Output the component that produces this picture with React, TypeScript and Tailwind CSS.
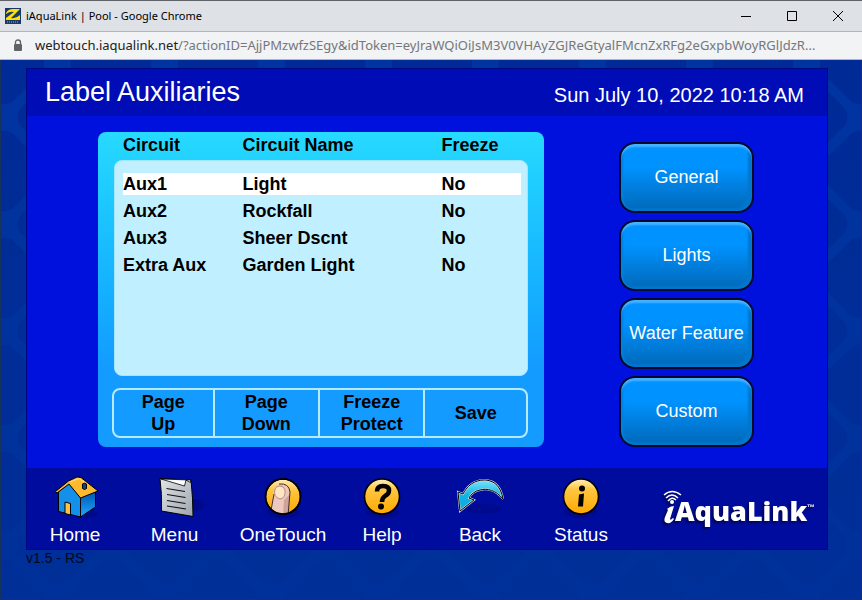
import type { ReactNode } from "react";
import { clsx } from "clsx";

const circuits = [
  { circuit: "Aux1", name: "Light", freeze: "No" },
  { circuit: "Aux2", name: "Rockfall", freeze: "No" },
  { circuit: "Aux3", name: "Sheer Dscnt", freeze: "No" },
  { circuit: "Extra Aux", name: "Garden Light", freeze: "No" },
];

const actions = [["Page", "Up"], ["Page", "Down"], ["Freeze", "Protect"], ["Save"]];

const categories = ["General", "Lights", "Water Feature", "Custom"];

function HomeIcon() {
  return (
    <svg width="48" height="44" viewBox="0 0 48 44">
      <defs>
        <linearGradient id="wall" x1="0" y1="0" x2="0" y2="1">
          <stop offset="0" stopColor="#0058b4" />
          <stop offset="1" stopColor="#1fa8ff" />
        </linearGradient>
      </defs>
      <ellipse cx="34" cy="37" rx="13" ry="5" fill="#000880" opacity=".7" />
      <path d="M7.5 16 L18 7 L29.5 21 V41 L7.5 35.5 Z" fill="#1590ea" stroke="#000" />
      <path d="M29.5 21 L44.5 16 V31 L29.5 41 Z" fill="url(#wall)" stroke="#000" />
      <path
        d="M4.5 15.5 L17.5 5 L26 1 L30 1.5 L47 15 L29.5 22 L18 8 L6 17 Z"
        fill="#ffb92c"
        stroke="#000"
        strokeLinejoin="round"
      />
      <path d="M19 6 L28 2.5 L36 8" fill="none" stroke="#ffe08a" />
      <path d="M31.5 8 L33.5 7 L35.5 8 V12.5 L33.5 13.5 L31.5 12.5 Z" fill="#1c3f7c" stroke="#000" />
      <path d="M14 26 L19.5 27.5 V39 L14 37.5 Z" fill="#ffc044" stroke="#000" />
    </svg>
  );
}

function MenuIcon() {
  return (
    <svg width="48" height="44" viewBox="0 0 48 44" className="overflow-visible">
      <defs>
        <linearGradient id="sheet" x1="0" y1="0" x2="1" y2="1">
          <stop offset="0" stopColor="#e2e5e9" />
          <stop offset="1" stopColor="#9da4ac" />
        </linearGradient>
      </defs>
      <ellipse cx="44" cy="29" rx="9" ry="6" fill="#000880" opacity=".7" />
      <path d="M9 2.5 L40 4 Q42 22 42 40.5 L10.5 35 Q11 18 9 2.5 Z" fill="url(#sheet)" stroke="#000" />
      <path d="M10 3 L33.5 10 L35 4 L39.5 6.5 V4 Z" fill="#fff" stroke="#000" strokeWidth=".8" />
      <path
        d="M15.5 12.5 L34 15.5 M16 18.5 L34.5 21.5 M16 24.5 L34.5 27.5 M16 30 L35 33"
        stroke="#111"
        strokeWidth="1.2"
      />
    </svg>
  );
}

function GoldDisc({ children }: { children: ReactNode }) {
  return (
    <svg width="48" height="44" viewBox="0 0 48 44">
      <defs>
        <linearGradient id="gold" x1="0" y1="0" x2="0" y2="1">
          <stop offset="0" stopColor="#fff0bd" />
          <stop offset=".3" stopColor="#ffc640" />
          <stop offset="1" stopColor="#ffa800" />
        </linearGradient>
        <clipPath id="disc">
          <circle cx="24" cy="20.5" r="17" />
        </clipPath>
      </defs>
      <ellipse cx="24" cy="36" rx="17" ry="6" fill="#000880" opacity=".7" />
      <circle cx="24" cy="20.5" r="17.5" fill="url(#gold)" stroke="#000" strokeWidth="1.6" />
      {children}
    </svg>
  );
}

function TouchIcon() {
  return (
    <GoldDisc>
      <g clipPath="url(#disc)">
        <path d="M11 40 L14.5 16 Q15 8 22.5 8 Q30 8 31 16 L29 40 Z" fill="#edc8bd" />
        <path d="M25 24 L24 40 H29 L31 18 Z" fill="#b68c86" opacity=".6" />
        <path d="M11 40 L15 18 M20 8 Q30 7 31 16 L29 40" fill="none" stroke="#402a26" />
        <path d="M16 13 Q17 10 21 10 Q25 10 26 14 Q27 22 21 23 Q14 21 16 13 Z" fill="#ffe7c6" stroke="#b38b7c" />
      </g>
      <circle cx="24" cy="20.5" r="17.5" fill="none" stroke="#000" strokeWidth="1.6" />
    </GoldDisc>
  );
}

function HelpIcon() {
  return (
    <GoldDisc>
      <path d="M19 15.5 Q19 10 25 10 Q31 10 31 14.5 Q31 18 27 20 Q24 22 24 26" fill="none" stroke="#000" strokeWidth="4.5" />
      <circle cx="23" cy="30.5" r="3" fill="#000" />
    </GoldDisc>
  );
}

function BackIcon() {
  return (
    <svg width="48" height="44" viewBox="-1 0 48 44" className="overflow-visible">
      <defs>
        <linearGradient id="arrow" x1="0" y1="0" x2="0" y2="1">
          <stop offset="0" stopColor="#7ce4fa" />
          <stop offset=".5" stopColor="#0cb4e6" />
          <stop offset="1" stopColor="#12a6dd" />
        </linearGradient>
      </defs>
      <ellipse cx="27" cy="33" rx="17" ry="5" fill="#000880" opacity=".5" />
      <path
        d="M3 35 L1 16 L6 18 C13 5 22 4 29 4 C38 5 44 11 46 23 C39 14 30 12 23 14 C18 15 14 18 12 22 L17 24 Z"
        fill="url(#arrow)"
        stroke="#d9e0e8"
        strokeWidth="2"
      />
      <path
        d="M3 35 L1 16 L6 18 C13 5 22 4 29 4 C38 5 44 11 46 23 C39 14 30 12 23 14 C18 15 14 18 12 22 L17 24 Z"
        fill="none"
        stroke="#000"
      />
    </svg>
  );
}

function StatusIcon() {
  return (
    <GoldDisc>
      <circle cx="25" cy="12.5" r="3" fill="#000" />
      <path d="M22 18.5 L27 17.5 L26 30.5 H21 Z" fill="#000" />
    </GoldDisc>
  );
}

const navItems = [
  { label: "Home", icon: <HomeIcon /> },
  { label: "Menu", icon: <MenuIcon /> },
  { label: "OneTouch", icon: <TouchIcon /> },
  { label: "Help", icon: <HelpIcon /> },
  { label: "Back", icon: <BackIcon /> },
  { label: "Status", icon: <StatusIcon /> },
];

function Logo() {
  return (
    <svg
      width="156"
      height="46"
      viewBox="0 0 156 46"
      role="img"
      aria-label="iAquaLink"
      className="drop-shadow-[-2px_2px_1px_#000550]"
    >
      <g fill="#fff">
        <path d="M4 19 Q7 16 11 16 L7 29 Q7 31 10 28 L11 29 Q8 34 4 33 Q0 32 2 27 L5 20 Z" />
        <circle cx="9" cy="12" r="2" />
        <text x="12" y="31" fontFamily="Open Sans, sans-serif" fontSize="27" fontWeight="800">
          AquaLink
        </text>
        <text x="144" y="20" fontFamily="Liberation Sans, sans-serif" fontSize="8" fontWeight="700">
          ™
        </text>
      </g>
      <path d="M1 5 Q9 -2 18 5 M3 8 Q9 2 15 8 M5 11 Q9 6 13 10" fill="none" stroke="#fff" strokeWidth="1.5" />
    </svg>
  );
}

function Favicon() {
  return (
    <svg width="16" height="16" viewBox="0 0 16 16">
      <path d="M0 0 H16 V16 H0 Z" fill="#183a6b" />
      <path d="M1 5 Q3 1 8 1 H15 L6 10 Q11 11 15 7 V12 H1 V10 L9 4 Q5 3 1 6 Z" fill="#ffe000" />
      <path d="M2 14 H14" stroke="#c8b428" strokeDasharray="1 1" />
    </svg>
  );
}

function TitleBar() {
  return (
    <header className="flex h-8 items-center border-t border-b border-t-[#606367] border-b-[#b3b5b8] bg-[#dee1e6] pl-[5px]">
      <Favicon />
      <h1 className="ml-[5px] flex-1 font-['Noto_Sans',sans-serif] text-[11px] text-black">
        iAquaLink | Pool - Google Chrome
      </h1>
      <div className="flex pr-px">
        <button type="button" aria-label="Minimize" className="flex w-[46px] justify-center">
          <svg width="12" height="12" viewBox="0 0 12 12" stroke="#000">
            <path d="M1 6.5 H11" />
          </svg>
        </button>
        <button type="button" aria-label="Maximize" className="flex w-[46px] justify-center">
          <svg width="12" height="12" viewBox="0 0 12 12" stroke="#000" fill="none">
            <path d="M1.5 1.5 H10.5 V10.5 H1.5 Z" />
          </svg>
        </button>
        <button type="button" aria-label="Close" className="flex w-[46px] justify-center">
          <svg width="12" height="12" viewBox="0 0 12 12" stroke="#000">
            <path d="M1 1 L11 11 M11 1 L1 11" />
          </svg>
        </button>
      </div>
    </header>
  );
}

function AddressBar() {
  return (
    <div className="flex h-7 items-center gap-3 border-b border-[#b3b5b8] bg-[#f1f3f4] pl-[13px]">
      <svg width="10" height="13" viewBox="0 0 10 13" className="shrink-0">
        <path d="M2.5 5 V3.5 Q2.5 1 5 1 Q7.5 1 7.5 3.5 V5" fill="none" stroke="#5f6368" strokeWidth="1.4" />
        <rect x="1" y="5" width="8" height="7" rx="1" fill="#5f6368" />
      </svg>
      <p className="min-w-0 truncate font-['Noto_Sans',sans-serif] text-[13px] text-[#74777b]">
        <span className="text-[#202124]">webtouch.iaqualink.net</span>
        /?actionID=AjjPMzwfzSEgy&idToken=eyJraWQiOiJsM3V0VHAyZGJReGtyalFMcnZxRFg2eGxpbWoyRGlJdzR...
      </p>
    </div>
  );
}

// Rounded diamond tiles behind the console
function Backdrop() {
  return (
    <svg className="absolute inset-0 h-full w-full" aria-hidden="true">
      <defs>
        <pattern id="tiles" x="57" y="4" width="107" height="107" patternUnits="userSpaceOnUse">
          <g fill="#002b96">
            <rect x="20" y="-33" width="66" height="66" rx="15" transform="rotate(45 53 0)" />
            <rect x="20" y="74" width="66" height="66" rx="15" transform="rotate(45 53 107)" />
            <rect x="-33" y="20" width="66" height="66" rx="15" transform="rotate(45 0 53)" />
            <rect x="74" y="20" width="66" height="66" rx="15" transform="rotate(45 107 53)" />
          </g>
        </pattern>
        <linearGradient id="fade" x1="0" y1="0" x2="0" y2="1">
          <stop offset="0" stopColor="#003099" stopOpacity="0" />
          <stop offset=".7" stopColor="#003099" stopOpacity=".5" />
          <stop offset="1" stopColor="#003099" stopOpacity=".85" />
        </linearGradient>
      </defs>
      <rect width="100%" height="100%" fill="url(#tiles)" />
      <rect width="100%" height="100%" fill="url(#fade)" />
    </svg>
  );
}

function CircuitCard() {
  return (
    <section className="rounded-lg bg-linear-to-b from-[#27daff] to-[#149bff] to-75% pb-[9px]">
      <div className="grid">
        <div className="mx-4 mt-7 h-[216px] rounded-lg border border-[#a5e6ff] bg-[#c0f0ff] [grid-area:1/1]" />
        <div className="relative mr-[23px] ml-[25px] [grid-area:1/1]">
          <table className="w-full table-fixed border-separate border-spacing-x-0 border-spacing-y-[5px] text-left text-[18px] leading-[22px] font-bold text-black">
            <thead>
              <tr className="leading-[17px]">
                <th scope="col" className="w-[30%] p-0 pb-[14px]">Circuit</th>
                <th scope="col" className="w-[50%] p-0 pb-[14px]">Circuit Name</th>
                <th scope="col" className="w-[20%] p-0 pb-[14px]">Freeze</th>
              </tr>
            </thead>
            <tbody>
              {circuits.map((row, index) => (
                <tr key={row.circuit} className={clsx(index === 0 && "bg-white")}>
                  <td className="p-0">{row.circuit}</td>
                  <td className="p-0">{row.name}</td>
                  <td className="p-0">{row.freeze}</td>
                </tr>
              ))}
            </tbody>
          </table>
        </div>
      </div>
      <div className="mt-3 mr-4 ml-[14px] grid h-[50px] grid-cols-[101fr_106fr_106fr_101fr] divide-x-2 divide-[#b5eaff] rounded-lg border-2 border-[#b5eaff]">
        {actions.map((words) => (
          <button key={words.join(" ")} type="button" className="text-[18px] leading-[22px] font-bold text-black">
            {words.map((word) => (
              <span key={word} className="block">{word}</span>
            ))}
          </button>
        ))}
      </div>
    </section>
  );
}

export default function App() {
  return (
    <div className="flex min-h-screen flex-col font-['Liberation_Sans',Arial,sans-serif]">
      <TitleBar />
      <AddressBar />
      <main className="relative flex-1 border-x border-b border-[#17335c] bg-[#0034a0]">
        <Backdrop />
        <div className="relative pt-2 pr-[33px] pl-[25px]">
          <div className="border border-[#000680] bg-[#0010dd] text-white">
            <div className="flex h-[47px] items-center justify-between bg-[#000cb5] pr-[23px] pl-[18px]">
              <h2 className="pb-[2px] text-[27px] leading-[44px]">Label Auxiliaries</h2>
              <time className="pt-1 text-[20px]">Sun July 10, 2022 10:18 AM</time>
            </div>

            <div className="grid grid-cols-[446fr_135fr] gap-[75px] pt-4 pr-[73px] pb-[21px] pl-[71px]">
              <CircuitCard />
              <div className="flex flex-col justify-between pt-[10px]">
                {categories.map((label) => (
                  <button
                    key={label}
                    type="button"
                    className="h-[71px] rounded-2xl border-2 border-[#00082a] bg-linear-to-b from-[#0092ff] from-35% to-[#0068b8] pb-px text-[18px] whitespace-nowrap shadow-[inset_0_4px_2px_-1px_#48b2ff,inset_-4px_-3px_2px_#0076cc,inset_2px_0_2px_#0080dc]"
                  >
                    {label}
                  </button>
                ))}
              </div>
            </div>

            <footer className="grid h-[81px] grid-cols-[599fr_201fr] items-start bg-[#000c9d]">
              <nav className="grid grid-cols-[96fr_103fr_114fr_84fr_112fr_90fr] pt-2">
                {navItems.map((item) => (
                  <a key={item.label} href={`#${item.label.toLowerCase()}`} className="flex flex-col items-center">
                    {item.icon}
                    <span className="mt-1 text-[19px] leading-[22px]">{item.label}</span>
                  </a>
                ))}
              </nav>
              <div className="pt-[22px] pl-[37px]">
                <Logo />
              </div>
            </footer>
          </div>
          <p className="text-[14px] leading-4 text-[#00081c]">v1.5 - RS</p>
        </div>
      </main>
    </div>
  );
}
